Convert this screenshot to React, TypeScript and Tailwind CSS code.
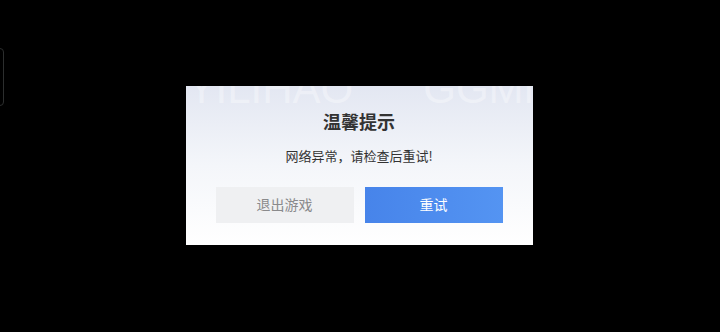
export default function App() {
  return (
    <div className="relative h-[332px] w-[720px] overflow-hidden bg-black" style={{ fontFamily: '"Noto Sans CJK SC", "Noto Sans", sans-serif' }}>
      {/* side handle partly off screen */}
      <div className="absolute left-[-20px] top-[48px] h-[58px] w-[24px] rounded-[4px] border border-[#2c2e2e]" />

      <div className="flex h-full items-center justify-center">
        <div className="relative ml-[-2px] mt-[-2px] flex h-[159px] w-[347px] flex-col items-center overflow-hidden bg-gradient-to-b from-[#e3e7f2] via-[#f4f6fa] to-white">
          {/* faint watermark */}
          <div aria-hidden className="pointer-events-none absolute left-[2px] top-[-16px] flex gap-[70px] whitespace-nowrap text-[42px] leading-[38px] text-white/35" style={{ fontFamily: '"Liberation Sans", sans-serif' }}>
            <span>YILIHAO</span>
            <span>GGMN</span>
          </div>
          <h1 className="relative mt-[21px] text-[18px] font-bold leading-[28px] text-[#333]">温馨提示</h1>
          <p className="relative mt-[11px] text-[13px] leading-[20px] text-[#333]">网络异常，请检查后重试!</p>
          <div className="relative mt-[21px] flex gap-[11px]">
            <button className="h-[36px] w-[138px] bg-[#eff0f2] text-[14px] text-[#8a8a8c]">退出游戏</button>
            <button className="h-[36px] w-[138px] bg-gradient-to-r from-[#4784ea] to-[#5494f2] text-[14px] text-white">重试</button>
          </div>
        </div>
      </div>
    </div>
  );
}
